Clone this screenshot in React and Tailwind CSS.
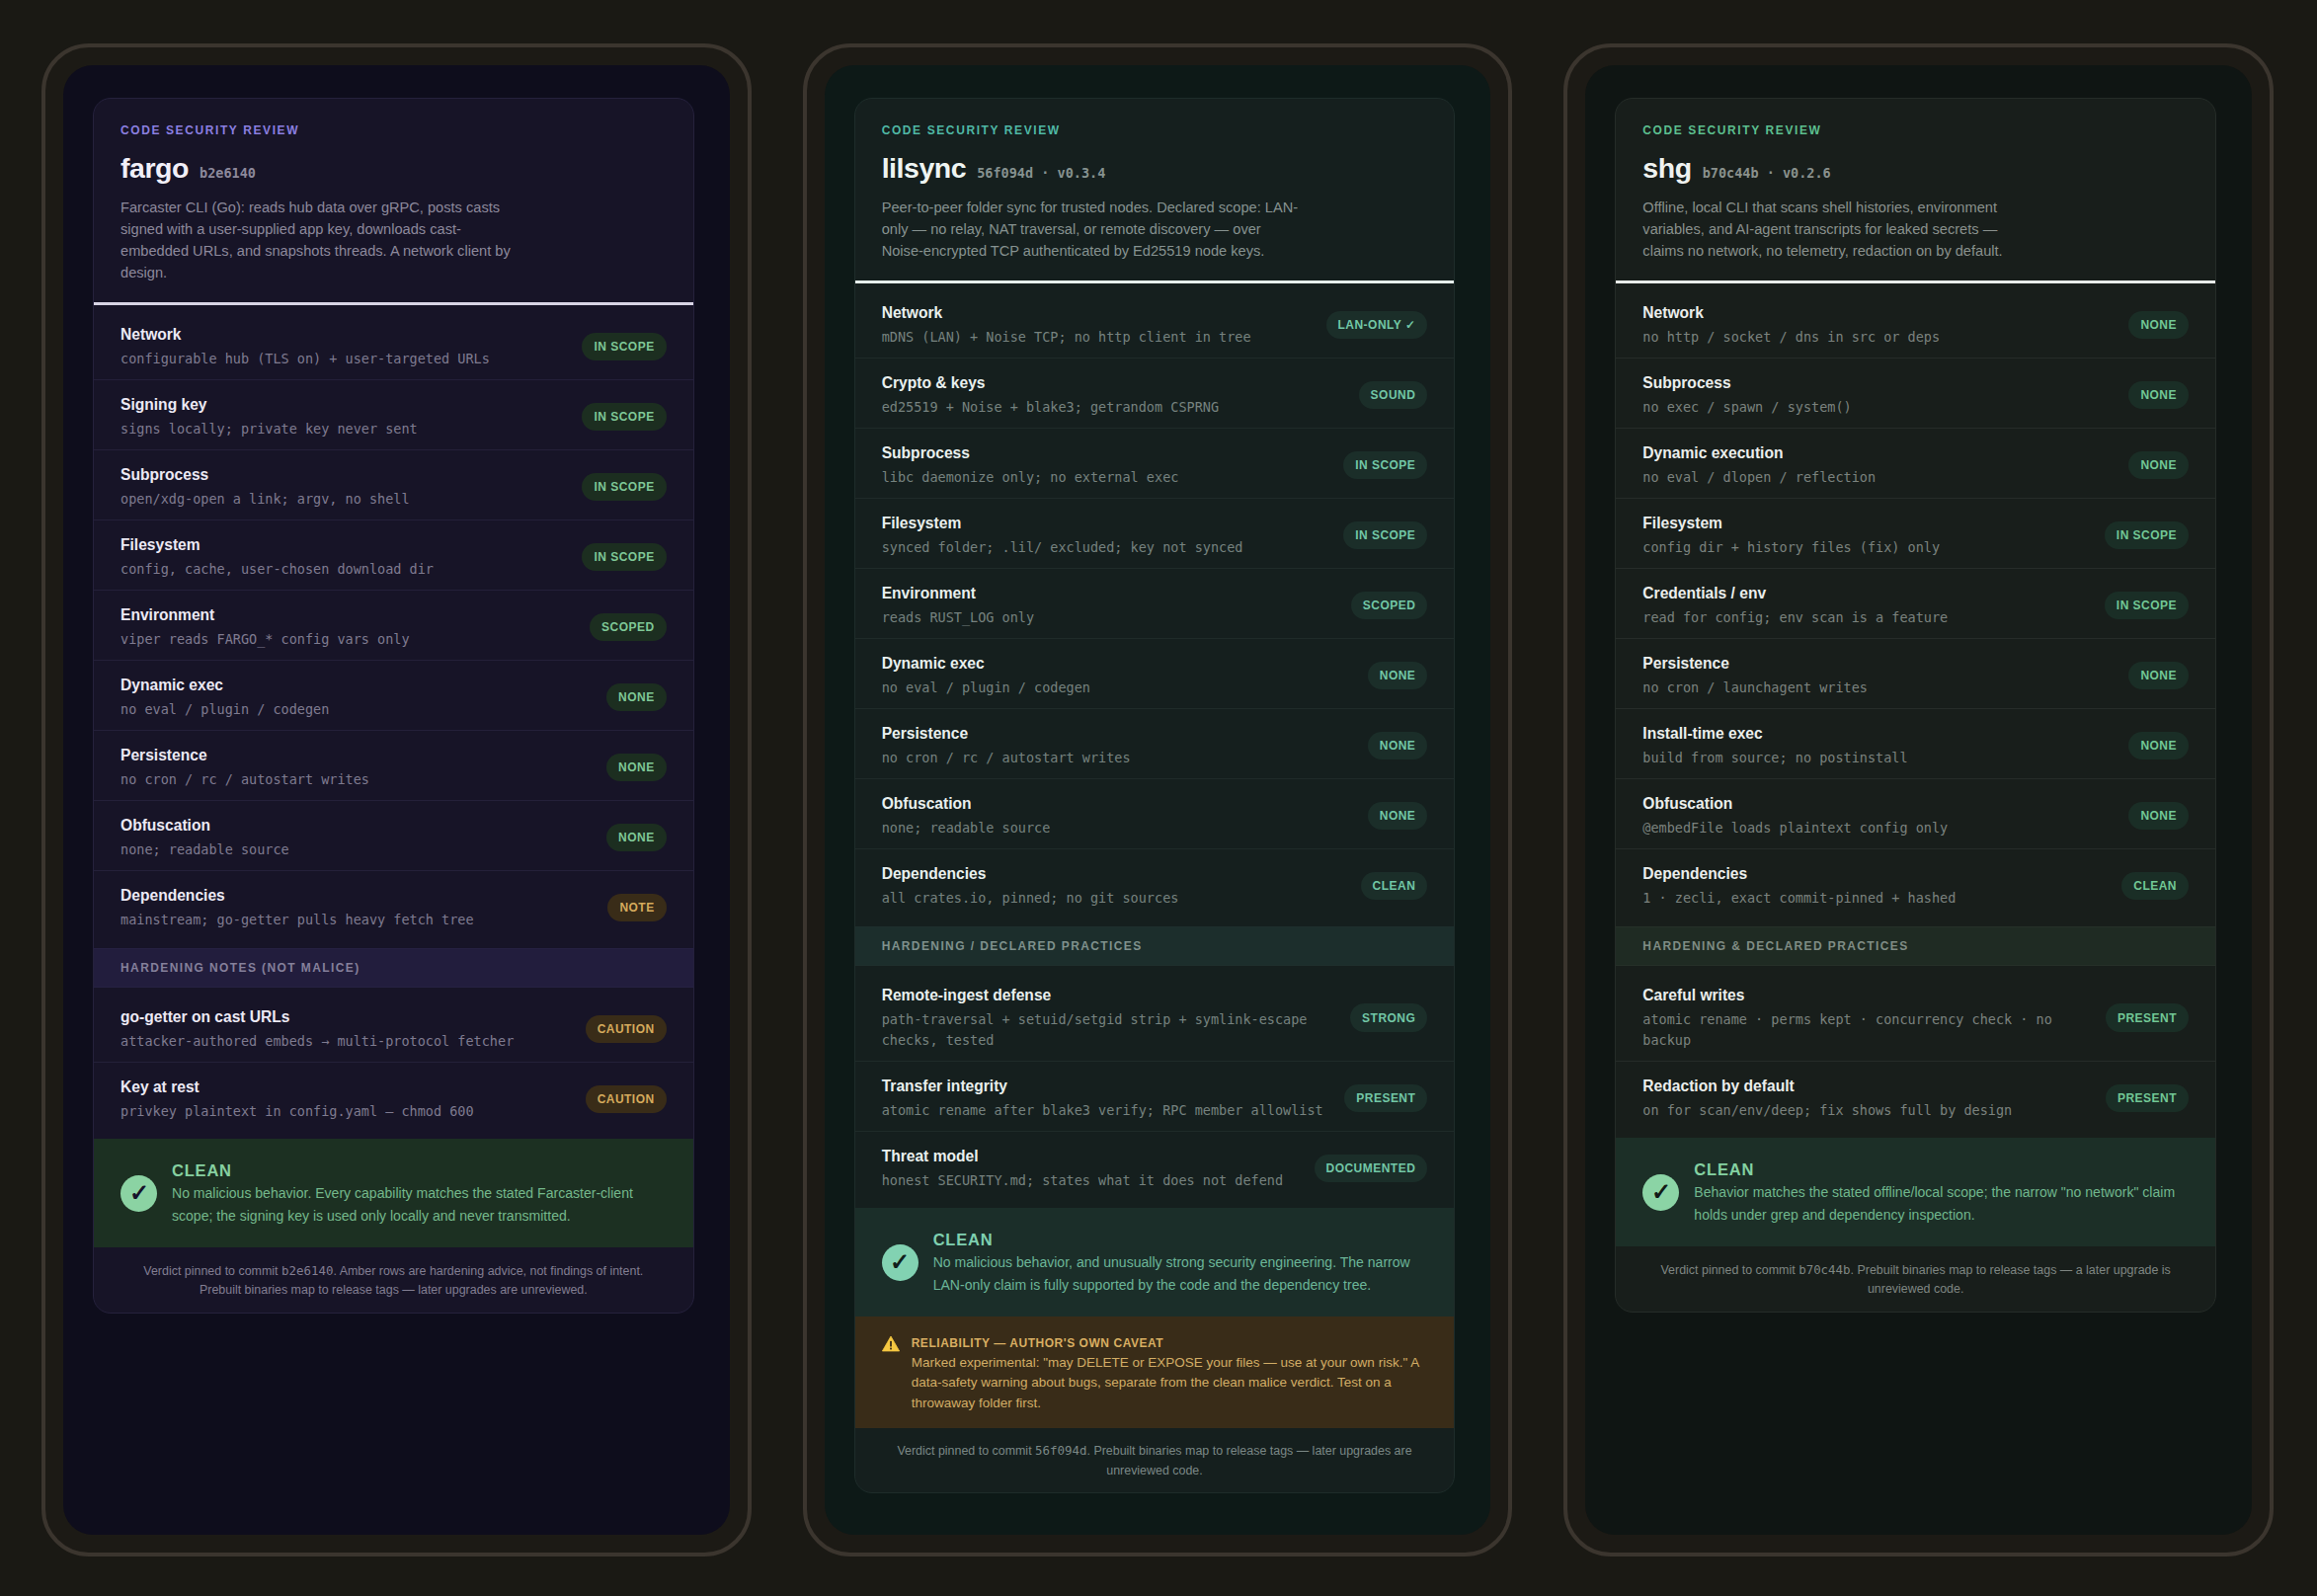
const themes = {
  fargo: {
    screen: "bg-[#0e0d1c]", card: "bg-[#171427] border-[#25213c]", label: "text-[#8b7fe0]", title: "text-[#f1eff8]",
    hash: "text-[#8d899c]", desc: "text-[#8d899c] max-w-[410px]", rule: "border-[#d8d4e4]", row: "border-[#242039]", name: "text-[#ece9f4]",
    sub: "text-[#7f7b90]", section: "bg-[#221d3d] border-[#262142]", sectionText: "text-[#85809b]",
    verdict: "bg-[#1c3022]", clean: "text-[#86d0a0]", verdictText: "text-[#74b88b]", circle: "bg-[#8bd3a3]", tick: "text-[#15122a]",
    foot: "text-[#827e92]", pill: "bg-[#1c2e20] text-[#7fc796]",
  },
  lilsync: {
    screen: "bg-[#0d1917]", card: "bg-[#151f1e] border-[#1e2c2a]", label: "text-[#4fb8a5]", title: "text-[#eef4f2]",
    hash: "text-[#869290]", desc: "text-[#869290] max-w-[425px]", rule: "border-[#e6efec]", row: "border-[#1f2b29]", name: "text-[#e9f0ee]",
    sub: "text-[#76827f]", section: "bg-[#1c2e2c] border-[#1e2f2d]", sectionText: "text-[#7f918d]",
    verdict: "bg-[#1b2e29]", clean: "text-[#7fd0b0]", verdictText: "text-[#6bb598]", circle: "bg-[#82d2b2]", tick: "text-[#10201c]",
    foot: "text-[#7b8886]", pill: "bg-[#1b2e29] text-[#72c7a6]",
  },
  shg: {
    screen: "bg-[#0f1513]", card: "bg-[#181e1b] border-[#252c28]", label: "text-[#5cbf8f]", title: "text-[#eff2f0]",
    hash: "text-[#8a918d]", desc: "text-[#8a918d] max-w-[395px]", rule: "border-[#e8ece9]", row: "border-[#262c29]", name: "text-[#ebeeec]",
    sub: "text-[#7b827e]", section: "bg-[#1f2b23] border-[#263029]", sectionText: "text-[#808d85]",
    verdict: "bg-[#1c2f27]", clean: "text-[#84d2a2]", verdictText: "text-[#70b78d]", circle: "bg-[#8bd4a5]", tick: "text-[#121a16]",
    foot: "text-[#7f8682]", pill: "bg-[#1a2e26] text-[#72c795]",
  },
}

const amber = "bg-[#392c18] text-[#d5aa5c]"

const reviews = [
  {
    theme: themes.fargo,
    name: "fargo",
    hash: "b2e6140",
    desc: "Farcaster CLI (Go): reads hub data over gRPC, posts casts signed with a user-supplied app key, downloads cast-embedded URLs, and snapshots threads. A network client by design.",
    rows: [
      ["Network", "configurable hub (TLS on) + user-targeted URLs", "IN SCOPE"],
      ["Signing key", "signs locally; private key never sent", "IN SCOPE"],
      ["Subprocess", "open/xdg-open a link; argv, no shell", "IN SCOPE"],
      ["Filesystem", "config, cache, user-chosen download dir", "IN SCOPE"],
      ["Environment", "viper reads FARGO_* config vars only", "SCOPED"],
      ["Dynamic exec", "no eval / plugin / codegen", "NONE"],
      ["Persistence", "no cron / rc / autostart writes", "NONE"],
      ["Obfuscation", "none; readable source", "NONE"],
      ["Dependencies", "mainstream; go-getter pulls heavy fetch tree", "NOTE", true],
    ],
    section: "HARDENING NOTES (NOT MALICE)",
    extra: [
      ["go-getter on cast URLs", "attacker-authored embeds → multi-protocol fetcher", "CAUTION", true],
      ["Key at rest", "privkey plaintext in config.yaml — chmod 600", "CAUTION", true],
    ],
    verdict: "No malicious behavior. Every capability matches the stated Farcaster-client scope; the signing key is used only locally and never transmitted.",
    foot: ["Verdict pinned to commit ", "b2e6140", ". Amber rows are hardening advice, not findings of intent. Prebuilt binaries map to release tags — later upgrades are unreviewed."],
  },
  {
    theme: themes.lilsync,
    name: "lilsync",
    hash: "56f094d · v0.3.4",
    desc: "Peer-to-peer folder sync for trusted nodes. Declared scope: LAN-only — no relay, NAT traversal, or remote discovery — over Noise-encrypted TCP authenticated by Ed25519 node keys.",
    rows: [
      ["Network", "mDNS (LAN) + Noise TCP; no http client in tree", "LAN-ONLY ✓"],
      ["Crypto & keys", "ed25519 + Noise + blake3; getrandom CSPRNG", "SOUND"],
      ["Subprocess", "libc daemonize only; no external exec", "IN SCOPE"],
      ["Filesystem", "synced folder; .lil/ excluded; key not synced", "IN SCOPE"],
      ["Environment", "reads RUST_LOG only", "SCOPED"],
      ["Dynamic exec", "no eval / plugin / codegen", "NONE"],
      ["Persistence", "no cron / rc / autostart writes", "NONE"],
      ["Obfuscation", "none; readable source", "NONE"],
      ["Dependencies", "all crates.io, pinned; no git sources", "CLEAN"],
    ],
    section: "HARDENING / DECLARED PRACTICES",
    extra: [
      ["Remote-ingest defense", "path-traversal + setuid/setgid strip + symlink-escape checks, tested", "STRONG"],
      ["Transfer integrity", "atomic rename after blake3 verify; RPC member allowlist", "PRESENT"],
      ["Threat model", "honest SECURITY.md; states what it does not defend", "DOCUMENTED"],
    ],
    verdict: "No malicious behavior, and unusually strong security engineering. The narrow LAN-only claim is fully supported by the code and the dependency tree.",
    caveat: {
      title: "RELIABILITY — AUTHOR'S OWN CAVEAT",
      text: 'Marked experimental: "may DELETE or EXPOSE your files — use at your own risk." A data-safety warning about bugs, separate from the clean malice verdict. Test on a throwaway folder first.',
    },
    foot: ["Verdict pinned to commit ", "56f094d", ". Prebuilt binaries map to release tags — later upgrades are unreviewed code."],
  },
  {
    theme: themes.shg,
    name: "shg",
    hash: "b70c44b · v0.2.6",
    desc: "Offline, local CLI that scans shell histories, environment variables, and AI-agent transcripts for leaked secrets — claims no network, no telemetry, redaction on by default.",
    rows: [
      ["Network", "no http / socket / dns in src or deps", "NONE"],
      ["Subprocess", "no exec / spawn / system()", "NONE"],
      ["Dynamic execution", "no eval / dlopen / reflection", "NONE"],
      ["Filesystem", "config dir + history files (fix) only", "IN SCOPE"],
      ["Credentials / env", "read for config; env scan is a feature", "IN SCOPE"],
      ["Persistence", "no cron / launchagent writes", "NONE"],
      ["Install-time exec", "build from source; no postinstall", "NONE"],
      ["Obfuscation", "@embedFile loads plaintext config only", "NONE"],
      ["Dependencies", "1 · zecli, exact commit-pinned + hashed", "CLEAN"],
    ],
    section: "HARDENING & DECLARED PRACTICES",
    extra: [
      ["Careful writes", "atomic rename · perms kept · concurrency check · no backup", "PRESENT"],
      ["Redaction by default", "on for scan/env/deep; fix shows full by design", "PRESENT"],
    ],
    verdict: 'Behavior matches the stated offline/local scope; the narrow "no network" claim holds under grep and dependency inspection.',
    foot: ["Verdict pinned to commit ", "b70c44b", ". Prebuilt binaries map to release tags — a later upgrade is unreviewed code."],
  },
]

const mono = "[font-family:'DejaVu_Sans_Mono',monospace]"

function Row({ row, theme }) {
  const [name, sub, tag, warn] = row
  return (
    <div className={`flex items-center gap-[18px] px-[27px] pt-[14px] pb-[10px] border-b last:border-b-0 ${theme.row}`}>
      <div className="flex-1 min-w-0">
        <div className={`text-[15.6px] leading-[22px] font-bold ${theme.name}`}>{name}</div>
        <div className={`mt-[3px] text-[13.5px] leading-[21px] ${mono} ${theme.sub}`}>{sub}</div>
      </div>
      <span className={`shrink-0 rounded-full h-[28.5px] flex items-center px-[12px] text-[12px] font-bold tracking-[0.48px] ${warn ? amber : theme.pill}`}>
        {tag}
      </span>
    </div>
  )
}

function ReviewPhone({ review }) {
  const t = review.theme
  return (
    <div className="h-[1532px] rounded-[48px] border-[4px] border-[#3b352e] bg-[#1c1a15] p-[18px]">
      <div className={`h-full rounded-[30px] pt-[33px] pl-[30px] pr-[36px] ${t.screen}`}>
        <div className={`rounded-[18px] border overflow-hidden ${t.card}`}>
          <div className={`px-[27px] pt-[23px] pb-[19px] border-b-[3px] ${t.rule}`}>
            <div className={`text-[12px] leading-[18px] font-bold tracking-[1.6px] ${t.label}`}>CODE SECURITY REVIEW</div>
            <div className="mt-[11px] flex items-baseline gap-[11px]">
              <span className={`text-[28.5px] leading-[36px] font-bold tracking-[-0.45px] ${t.title}`}>{review.name}</span>
              <span className={`text-[13.5px] font-bold ${mono} ${t.hash}`}>{review.hash}</span>
            </div>
            <p className={`mt-[11px] text-[14.625px] leading-[22px] ${t.desc}`}>{review.desc}</p>
          </div>

          <div className="pt-[5px] pb-[8px]">
            {review.rows.map((r) => <Row key={r[0]} row={r} theme={t} />)}
          </div>

          <div className={`h-[40px] flex items-center px-[27px] border-y text-[12px] font-bold tracking-[1.4px] ${t.section} ${t.sectionText}`}>
            {review.section}
          </div>

          <div className="pt-[5px] pb-[7px]">
            {review.extra.map((r) => <Row key={r[0]} row={r} theme={t} />)}
          </div>

          <div className={`flex items-center gap-[15px] px-[27px] h-[110px] ${t.verdict}`}>
            <div className={`shrink-0 w-[37px] h-[37px] rounded-full flex items-center justify-center text-[24px] font-bold ${t.circle} ${t.tick}`}>✓</div>
            <div>
              <div className={`text-[16.5px] leading-[24px] font-bold tracking-[0.8px] ${t.clean}`}>CLEAN</div>
              <p className={`text-[14.06px] leading-[23px] ${t.verdictText}`}>{review.verdict}</p>
            </div>
          </div>

          {review.caveat && (
            <div className="flex gap-[12px] px-[27px] pt-[17px] pb-[15px] bg-[#392c18]">
              <svg viewBox="0 0 24 22" className="shrink-0 w-[18px] h-[17px] mt-[2px]">
                <path d="M12 1 L23.5 21 H0.5 Z" fill="#f5c842" stroke="#f5c842" strokeLinejoin="round" />
                <rect x="10.8" y="7.5" width="2.4" height="7.5" fill="#392c18" />
                <rect x="10.8" y="16.5" width="2.4" height="2.4" fill="#392c18" />
              </svg>
              <div>
                <div className="text-[12px] leading-[20px] font-bold tracking-[0.54px] text-[#d8ae62]">{review.caveat.title}</div>
                <p className="text-[13.5px] leading-[20.25px] text-[#d2ad66]">{review.caveat.text}</p>
              </div>
            </div>
          )}

          <p className={`px-[30px] pt-[13.5px] pb-[12px] text-center text-[12.45px] leading-[19.5px] ${t.foot}`}>
            {review.foot[0]}<span className={mono}>{review.foot[1]}</span>{review.foot[2]}
          </p>
        </div>
      </div>
    </div>
  )
}

export default function App() {
  return (
    <div className="min-h-[1616px] bg-[#1a1914] pl-[42px] pr-[44px] pt-[44px] pb-[40px] grid grid-cols-3 gap-[52px] items-start [font-family:'Liberation_Sans',sans-serif]">
      {reviews.map((r) => <ReviewPhone key={r.name} review={r} />)}
    </div>
  )
}
